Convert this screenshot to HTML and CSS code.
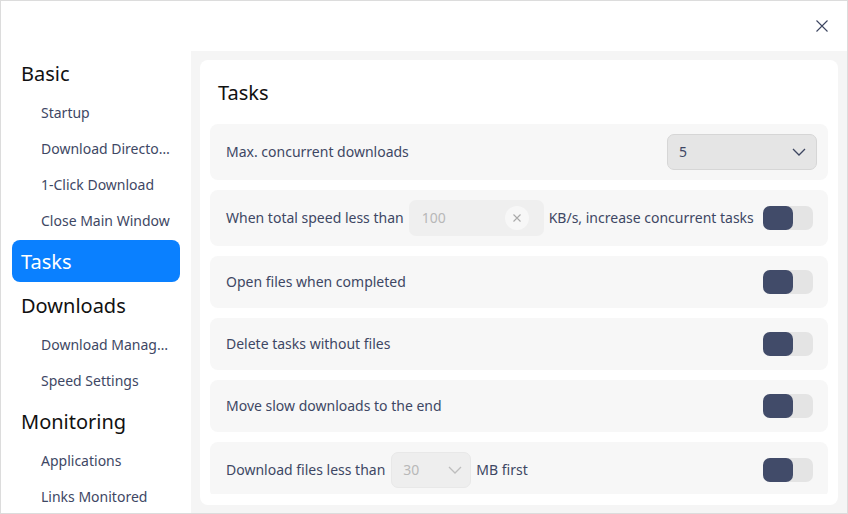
FILE: index.html
```html
<!DOCTYPE html>
<html>
<head>
<meta charset="utf-8">
<link rel="stylesheet" href="styles.css">
</head>
<body>
<div class="window">
  <div class="titlebar">
    <button class="close" aria-label="Close">
      <svg width="12" height="12" viewBox="0 0 12 12"><path d="M0.5 0.5L11.5 11.5M11.5 0.5L0.5 11.5" stroke="#3c4560" stroke-width="1.1" fill="none"/></svg>
    </button>
  </div>
  <div class="main">
    <nav class="sidebar">
      <div class="group">Basic</div>
      <div class="item">Startup</div>
      <div class="item">Download Directory</div>
      <div class="item">1-Click Download</div>
      <div class="item">Close Main Window</div>
      <div class="group active">Tasks</div>
      <div class="group">Downloads</div>
      <div class="item">Download Manager</div>
      <div class="item">Speed Settings</div>
      <div class="group">Monitoring</div>
      <div class="item">Applications</div>
      <div class="item">Links Monitored</div>
    </nav>
    <section class="content">
      <div class="card">
        <h1 class="title">Tasks</h1>
        <div class="rows">
          <div class="row tall">
            <span class="label">Max. concurrent downloads</span>
            <div class="select">
              <span>5</span>
              <svg width="14" height="8" viewBox="0 0 14 8"><path d="M1 1L7 7L13 1" stroke="#3c4560" stroke-width="1.3" fill="none"/></svg>
            </div>
          </div>
          <div class="row tall">
            <span class="label">When total speed less than</span>
            <div class="input">
              <span class="ph">100</span>
              <span class="clear"><svg width="8" height="8" viewBox="0 0 8 8"><path d="M0.5 0.5L7.5 7.5M7.5 0.5L0.5 7.5" stroke="#a9a9a9" stroke-width="1.1" fill="none"/></svg></span>
            </div>
            <span class="label">KB/s, increase concurrent tasks</span>
            <span class="spacer"></span>
            <div class="toggle"><span class="knob"></span></div>
          </div>
          <div class="row">
            <span class="label">Open files when completed</span>
            <span class="spacer"></span>
            <div class="toggle"><span class="knob"></span></div>
          </div>
          <div class="row">
            <span class="label">Delete tasks without files</span>
            <span class="spacer"></span>
            <div class="toggle"><span class="knob"></span></div>
          </div>
          <div class="row">
            <span class="label">Move slow downloads to the end</span>
            <span class="spacer"></span>
            <div class="toggle"><span class="knob"></span></div>
          </div>
          <div class="row tall">
            <span class="label">Download files less than</span>
            <div class="select small">
              <span>30</span>
              <svg width="14" height="8" viewBox="0 0 14 8"><path d="M1 1L7 7L13 1" stroke="#bdbdbd" stroke-width="1.3" fill="none"/></svg>
            </div>
            <span class="label">MB first</span>
            <span class="spacer"></span>
            <div class="toggle"><span class="knob"></span></div>
          </div>
        </div>
      </div>
    </section>
  </div>
</div>
</body>
</html>
```

FILE: styles.css
```css
* { box-sizing: border-box; }
html, body { margin: 0; padding: 0; }
body {
  font-family: "Noto Sans", "Open Sans", sans-serif;
  width: 848px;
  height: 514px;
  overflow: hidden;
  background: #fff;
}
.window {
  width: 848px;
  height: 514px;
  border: 1px solid #dcdcdc;
  display: flex;
  flex-direction: column;
  background: #fff;
}
.titlebar {
  height: 50px;
  flex: none;
  display: flex;
  justify-content: flex-end;
  align-items: flex-start;
}
.close {
  border: 0;
  background: none;
  padding: 0;
  margin: 19px 19px 0 0;
  width: 12px;
  height: 12px;
  display: flex;
}
.main {
  flex: 1;
  display: flex;
  min-height: 0;
}
.sidebar {
  width: 190px;
  flex: none;
  padding: 0 11px 0 11px;
  background: #fff;
  overflow: hidden;
}
.group {
  height: 42px;
  margin: 2px 0 0;
  padding-left: 9px;
  display: flex;
  align-items: center;
  font-size: 20px;
  color: #111;
  border-radius: 8px;
}
.group:first-child { margin-top: 1px; }
.group.active {
  background: #0a80ff;
  color: #fff;
}
.item {
  height: 36px;
  padding: 1px 10px 0 29px;
  line-height: 36px;
  font-size: 14px;
  color: #3e4764;
  white-space: nowrap;
  overflow: hidden;
  text-overflow: ellipsis;
}
.content {
  flex: 1;
  background: #f5f5f5;
  padding: 9px 9px 8px 9px;
  min-width: 0;
}
.card {
  background: #fff;
  border-radius: 8px;
  height: 100%;
  padding: 10px 10px 11px 10px;
  display: flex;
  flex-direction: column;
  overflow: hidden;
}
.title {
  margin: 0;
  height: 54px;
  flex: none;
  padding: 9px 0 0 8px;
  font-size: 20px;
  font-weight: 400;
  color: #111;
  line-height: 28px;
}
.rows {
  flex: 1;
  overflow: hidden;
  display: flex;
  flex-direction: column;
  gap: 10px;
}
.row {
  flex: none;
  height: 52px;
  background: #f7f7f7;
  border-radius: 8px;
  display: flex;
  align-items: center;
  padding: 0 15px 2px 16px;
  font-size: 14px;
  color: #3e4764;
}
.row.tall { height: 56px; }
.row .label { white-space: nowrap; }
.spacer { flex: 1; }
.select {
  margin: 2px -4px 0 auto;
  width: 150px;
  height: 36px;
  background: #e5e5e5;
  border: 1px solid #d6d6d6;
  border-radius: 7px;
  display: flex;
  align-items: center;
  justify-content: space-between;
  padding: 0 10px 1px 11px;
  font-size: 14px;
  color: #3e4764;
}
.select.small {
  margin: 2px 5px 0 6px;
  width: 80px;
  background: #eeeeee;
  border-color: #e8e8e8;
  color: #b8b8b8;
  padding: 0 8px 1px 11px;
}
.input {
  margin: 2px 5px 0 5px;
  width: 135px;
  height: 36px;
  background: #efefef;
  border-radius: 7px;
  display: flex;
  align-items: center;
  justify-content: space-between;
  padding: 0 15px 1px 13px;
}
.input .ph { color: #b8b8b8; font-size: 14px; }
.clear {
  width: 24px;
  height: 24px;
  border-radius: 50%;
  background: #f7f7f7;
  display: flex;
  align-items: center;
  justify-content: center;
}
.toggle {
  width: 50px;
  height: 24px;
  margin-top: 2px;
  background: #e4e4e4;
  border-radius: 7px;
  flex: none;
  display: flex;
}
.knob {
  width: 30px;
  height: 24px;
  background: #414b69;
  border-radius: 7px;
}
```
